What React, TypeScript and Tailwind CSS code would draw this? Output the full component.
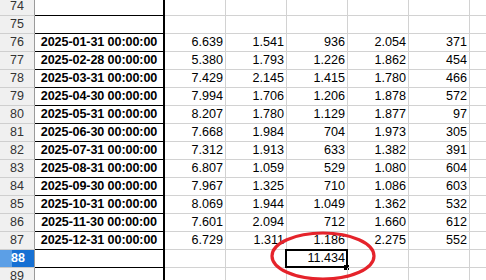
const rows: [number, string, string[]][] = [
  [76, "2025-01-31 00:00:00", ["6.639", "1.541", "936", "2.054", "371"]],
  [77, "2025-02-28 00:00:00", ["5.380", "1.793", "1.226", "1.862", "454"]],
  [78, "2025-03-31 00:00:00", ["7.429", "2.145", "1.415", "1.780", "466"]],
  [79, "2025-04-30 00:00:00", ["7.994", "1.706", "1.206", "1.878", "572"]],
  [80, "2025-05-31 00:00:00", ["8.207", "1.780", "1.129", "1.877", "97"]],
  [81, "2025-06-30 00:00:00", ["7.668", "1.984", "704", "1.973", "305"]],
  [82, "2025-07-31 00:00:00", ["7.312", "1.913", "633", "1.382", "391"]],
  [83, "2025-08-31 00:00:00", ["6.807", "1.059", "529", "1.080", "604"]],
  [84, "2025-09-30 00:00:00", ["7.967", "1.325", "710", "1.086", "603"]],
  [85, "2025-10-31 00:00:00", ["8.069", "1.944", "1.049", "1.362", "532"]],
  [86, "2025-11-30 00:00:00", ["7.601", "2.094", "712", "1.660", "612"]],
  [87, "2025-12-31 00:00:00", ["6.729", "1.311", "1.186", "2.275", "552"]],
];

const blank = ["", "", "", "", ""];

function Row({
  num,
  date,
  values,
  active,
}: {
  num: number;
  date: string;
  values: string[];
  active?: boolean;
}) {
  return (
    <div className="flex h-[18px] shrink-0">
      {active ? (
        <div className="flex w-[35px] shrink-0 border-r border-b border-r-[#9a9a9a] border-b-[#c9c9c9] bg-[#1670d3]">
          <div className="w-[12px] bg-[#5c9fe6]" />
          <span className="-ml-[12px] flex flex-1 items-center justify-center pl-[2px] text-[12.5px] font-bold leading-none text-white">
            {num}
          </span>
        </div>
      ) : (
        <div className="flex w-[35px] shrink-0 items-center justify-center border-r border-b border-r-[#9a9a9a] border-b-[#cfcfcf] bg-[#f0f0f0] text-[12.5px] leading-none text-[#333]">
          {num}
        </div>
      )}
      <div className="flex w-[130px] shrink-0 items-end justify-center border-r-2 border-b border-black pb-[2px] text-[12.6px] font-bold leading-none tracking-[-0.1px] text-black">
        {date}
      </div>
      {values.map((v, i) => (
        <div
          key={i}
          className="relative flex w-[61px] shrink-0 items-end justify-end border-r border-b border-[#d2d2d2] pr-[2px] pb-[2px] text-[12.6px] leading-none text-black"
        >
          {v}
          {active && i === 2 && (
            <>
              <div className="absolute -top-[1px] -left-[2px] h-[19px] w-[63px] border-2 border-black" />
              <div className="absolute -right-[2px] -bottom-[3px] h-[5px] w-[5px] bg-black" />
            </>
          )}
        </div>
      ))}
      <div className="flex-1 border-b border-[#d2d2d2]" />
    </div>
  );
}

export default function App() {
  return (
    <div
      className="relative h-[280px] w-[486px] overflow-hidden bg-white"
      style={{ fontFamily: '"Liberation Sans", Arial, sans-serif' }}
    >
      <div className="-mt-[2px] flex flex-col">
        <Row num={74} date="" values={blank} />
        <Row num={75} date="" values={blank} />
        {rows.map(([n, d, v]) => (
          <Row key={n} num={n} date={d} values={v} />
        ))}
        <Row num={88} date="" values={["", "", "11.434", "", ""]} active />
        <Row num={89} date="" values={blank} />
      </div>
      <svg
        className="pointer-events-none absolute left-0 top-0"
        width="486"
        height="280"
        viewBox="0 0 486 280"
      >
        <ellipse
          cx="323"
          cy="256"
          rx="51"
          ry="23"
          fill="none"
          stroke="#e5232b"
          strokeWidth="3.2"
        />
      </svg>
    </div>
  );
}
